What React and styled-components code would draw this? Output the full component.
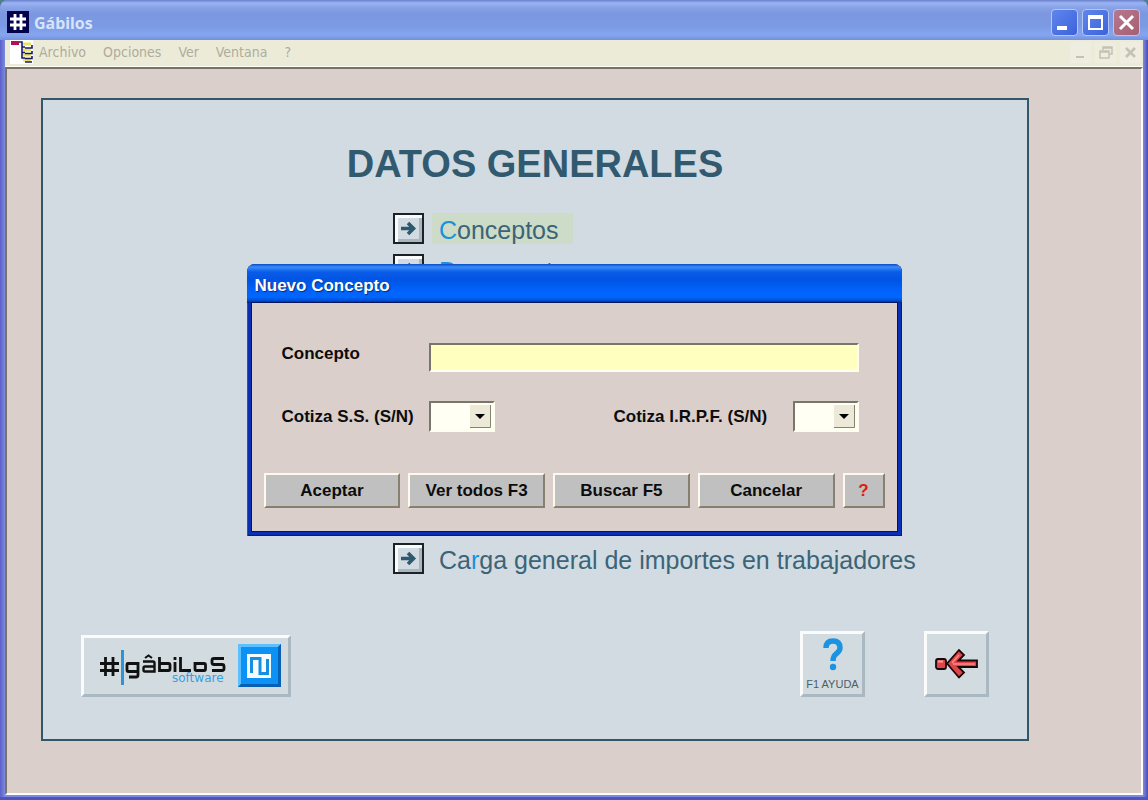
import React from "react";
import styled, { createGlobalStyle } from "styled-components";

const GlobalStyle = createGlobalStyle`
  * {
    box-sizing: border-box;
  }
  body {
    margin: 0;
    background: #4f7f8c;
    font-family: "Liberation Sans", Arial, sans-serif;
  }
`;

const Window = styled.div`
  min-height: 100vh;
  display: flex;
  flex-direction: column;
  padding: 0 5px 5px;
  border-radius: 8px 8px 0 0;
  background: linear-gradient(to right, #5a5fc8 0, #7c8ce0 5px, #7c8ce0 calc(100% - 5px), #4a4bb8 100%);
  box-shadow: inset 0 -3px 0 #5253bf;
`;

const TitleBar = styled.header`
  height: 40px;
  margin: 0 -5px;
  padding: 4px 8px 0 7px;
  display: flex;
  align-items: center;
  gap: 5px;
  border-radius: 8px 8px 0 0;
  background: linear-gradient(#6a80cc 0, #9ab4f2 3px, #8aa3e8 7px, #7b97e0 14px, #7c9ae4 26px, #84a6ef 35px, #7390dc 40px);
`;

const AppTitle = styled.h1`
  flex: 1;
  margin: 0;
  padding-top: 2px;
  font: bold 16px/22px "Noto Sans", sans-serif;
  color: #d5e4fb;
`;

const Controls = styled.div`
  display: flex;
  gap: 4px;
`;

const ControlButton = styled.button`
  width: 27px;
  height: 27px;
  padding: 0;
  display: flex;
  border: 1px solid #b4c6f6;
  border-radius: 4px;
  background: ${(props) => (props.$close ? "linear-gradient(135deg, #b5788f, #a85f70)" : "linear-gradient(135deg, #5f86ec, #3c62dc)")};

  svg {
    width: 25px;
    height: 25px;
  }
`;

const MenuBar = styled.nav`
  height: 27px;
  padding: 0 2px 2px 5px;
  display: flex;
  align-items: center;
  background: #ecebd8;
  border-bottom: 1px solid #fffef4;
`;

const MenuLink = styled.a`
  margin-right: 17px;
  font: 14px/20px "DejaVu Sans Condensed", "DejaVu Sans", sans-serif;
  color: #aeac9c;
  text-decoration: none;
`;

const MenuIcon = styled.svg`
  width: 23px;
  height: 24px;
  margin-right: 6px;
`;

const ChildControls = styled.div`
  margin-left: auto;
  display: flex;
  gap: 4px;
`;

const ChildButton = styled.button`
  width: 21px;
  height: 21px;
  padding: 0;
  border: none;
  background: #eeeddf;
`;

const Client = styled.main`
  flex: 1;
  display: flex;
  padding: 29px 112px 52px 34px;
  background: #dacfca;
  border: 2px solid #77736b;
  border-right-color: #fffdfa;
  border-bottom-color: #fffdfa;
`;

const Panel = styled.section`
  flex: 1;
  display: flex;
  flex-direction: column;
  padding: 40px 38px 42px;
  background: #d2dbe1;
  border: 2px solid #315768;
`;

const Heading = styled.h2`
  margin: 0;
  font-size: 38px;
  line-height: 48px;
  text-align: center;
  color: #315a70;
`;

const OptionList = styled.ul`
  height: 361px;
  margin: 25px 0 0 312px;
  padding: 0;
  display: flex;
  flex-direction: column;
  gap: 10px;
  list-style: none;
`;

const Option = styled.li`
  display: flex;
  align-items: center;
  gap: 8px;

  &:last-child {
    margin-top: auto;
  }
`;

const ArrowButton = styled.button`
  width: 31px;
  height: 31px;
  padding: 0;
  display: flex;
  align-items: center;
  justify-content: center;
  border: 2px solid #1b2226;
  background: #d2dbe1;
  box-shadow: inset 3px 3px 0 #f8fafb, inset -3px -3px 0 #aab6be;
`;

const OptionLink = styled.a`
  padding: 3px 14px 0 7px;
  font-size: 25px;
  line-height: 28px;
  color: #3b6478;
  text-decoration: none;
  white-space: nowrap;
  background: ${(props) => (props.$active ? "#cddcc8" : "transparent")};
`;

const HotKey = styled.span`
  color: #1b91dc;
`;

const Footer = styled.footer`
  margin-top: auto;
  display: flex;
  align-items: flex-end;
  gap: 59px;
`;

const RaisedButton = styled.button`
  width: ${(props) => props.$width}px;
  height: ${(props) => props.$height}px;
  padding: 0;
  display: flex;
  flex-direction: column;
  align-items: center;
  justify-content: center;
  background: #d2dbe0;
  border: 3px solid #fafcfc;
  border-right-color: #aab8c2;
  border-bottom-color: #aab8c2;
`;

const LogoButton = styled(RaisedButton)`
  margin-right: auto;
`;

const HelpText = styled.span`
  padding-top: 4px;
  font-size: 11px;
  line-height: 14px;
  color: #4c5f69;
  white-space: nowrap;
`;

const Overlay = styled.div`
  position: fixed;
  inset: 0;
  display: flex;
  align-items: center;
  justify-content: center;
`;

const Dialog = styled.form`
  width: 655px;
  padding: 0 5px 5px;
  border-radius: 8px 8px 0 0;
  background: #0b2fb4;
  box-shadow: inset 1px 0 0 #1a52d8, inset -1px -1px 0 #001c86;
`;

const DialogTitle = styled.h2`
  height: 39px;
  margin: 0 -5px;
  padding: 4px 8px 0;
  border-radius: 8px 8px 0 0;
  font: bold 17px/36px "Liberation Sans", sans-serif;
  color: #fff;
  text-shadow: 1px 1px 1px #0a2a80;
  background: linear-gradient(#0a4ac4 0, #3b8cf8 3px, #0a5ce8 8px, #0054e3 16px, #0062fb 26px, #0068ff 33px, #0048cc 37px, #001c6c 39px);
`;

const DialogBody = styled.div`
  padding: 40px 12px 23px;
  background: #dacfca;
  outline: 1px solid #04155c;
`;

const Fields = styled.div`
  display: flex;
  flex-direction: column;
  gap: 29px;
  padding: 0 26px 0 18px;
`;

const FieldRow = styled.div`
  display: flex;
  align-items: flex-start;
  justify-content: space-between;
`;

const Label = styled.label`
  min-width: ${(props) => props.$minWidth || 0}px;
  font-size: 17px;
  font-weight: bold;
  line-height: 22px;
  color: #0c0c0c;
  white-space: nowrap;
`;

const TextBox = styled.input`
  flex: 1;
  height: 29px;
  padding: 0 4px;
  font-size: 17px;
  background: #ffffc0;
  border: 2px solid #77766a;
  border-right-color: #fffff0;
  border-bottom-color: #fffff0;
`;

const SelectGroup = styled.div`
  display: flex;
  align-items: center;
`;

const SelectBox = styled.span`
  position: relative;
  display: block;
  width: 66px;
  height: 31px;

  svg {
    position: absolute;
    top: 4px;
    right: 4px;
    pointer-events: none;
  }
`;

const Select = styled.select`
  appearance: none;
  width: 100%;
  height: 100%;
  padding: 0 24px 0 4px;
  font-size: 16px;
  background: #fffff4;
  border: 2px solid #77766a;
  border-right-color: #fffff0;
  border-bottom-color: #fffff0;
  border-radius: 0;
`;

const Buttons = styled.div`
  display: flex;
  gap: 8px;
  margin-top: 41px;
`;

const PushButton = styled.button`
  flex: ${(props) => (props.$small ? "0 0 42px" : "1")};
  height: 35px;
  padding: 0;
  font: bold 17px/22px "Liberation Sans", sans-serif;
  color: ${(props) => (props.$small ? "#e01818" : "#0c0c0c")};
  background: #c0c0c0;
  border: 2px solid #fdf9ee;
  border-right-color: #85806f;
  border-bottom-color: #85806f;
`;

const HashIcon = () => (
  <svg width="22" height="22" viewBox="0 0 22 22">
    <path fill="#02024c" d="M0 0h22v22H0z" />
    <path d="M8 3v16M14 3v16M3 8h16M3 14h16" stroke="#fff" strokeWidth="2.800" />
  </svg>
);

const Arrow = () => (
  <svg width="17" height="17" viewBox="0 0 17 17">
    <path d="M1 8.500h12M8 3l5.500 5.500L8 14" fill="none" stroke="#2c5a70" strokeWidth="3.600" />
  </svg>
);

const GabilosLogo = () => (
  <svg width="204" height="56" viewBox="84 638 204 56">
    <g fill="none" stroke="#111" strokeWidth="2.800">
      <path d="M105.500 657v19M113 657v19M100 663.500h19M100 670.500h19" />
      <path d="M138 663.500H128q-1 0-1 1v6q0 1 1 1h10M138 662v13q0 2-2 2h-7" />
      <path d="M143 661.500h10q1.500 0 1.500 1.500v8.500H145q-1.500 0-1.500-1.500v-2q0-1.500 1.500-1.500h9" strokeWidth="2.400" />
      <path d="M145 658l3.500-2.500 3.500 2.500" strokeWidth="2" />
      <path d="M159.500 657v13.500h9q1.500 0 1.500-1.500v-4q0-1.500-1.500-1.500h-9" />
      <path d="M175 662v10M175 657v3M180.500 657v13.500H191M195 663.500h9q1.500 0 1.500 1.500v4q0 1.500-1.500 1.500h-7.500q-1.500 0-1.500-1.500z" />
      <path d="M224 658.500h-10q-2 0-2 2v2q0 2 2 2h8q2 0 2 2v2q0 2-2 2h-10" />
    </g>
    <path d="M121 650h3v35h-3z" fill="#2c94d8" />
    <text x="172" y="682" fill="#3aa0e0" fontSize="12" fontFamily="DejaVu Sans, sans-serif">software</text>
    <path d="M238 644h43v43h-43z" fill="#0c92f4" />
    <path d="M238 644h43l-3 3h-37v37l-3 3z" fill="#5cc0ff" />
    <path d="M281 644v43h-43l3-3h37v-37z" fill="#0760b4" />
    <path d="M247 654h24v24h-24z" fill="#f4fafd" />
    <path d="M251.500 673v-14.500h8.500v15h7.500V659" fill="none" stroke="#168fe0" strokeWidth="3" />
  </svg>
);

const BackArrow = () => (
  <svg width="46" height="34" viewBox="1 0 46 34">
    <path d="M14 16.500L26 3l5 5-5.500 5.500H44v6.500H25.500L31 25.500l-5 5z" fill="#e04448" stroke="#17090a" strokeWidth="1.800" />
    <path d="M19 16l7-8M20 17h22" stroke="#ff8c88" strokeWidth="1.500" />
    <rect x="3" y="12" width="10" height="10" rx="2" fill="#e04448" stroke="#17090a" strokeWidth="1.800" />
    <path d="M5 14.500h5" stroke="#ff9c98" strokeWidth="2" />
  </svg>
);

const DropArrow = () => (
  <svg width="21" height="23" viewBox="0 0 21 23">
    <path fill="#ece9d8" d="M0 0h21v23H0z" />
    <path d="M20.500 0v22.500H0" fill="none" stroke="#85826f" />
    <path d="M5 9h10l-5 5z" fill="#000" />
  </svg>
);

const YesNoField = ({ id, label, minWidth }) => (
  <SelectGroup>
    <Label htmlFor={id} $minWidth={minWidth}>{label}</Label>
    <SelectBox>
      <Select id={id} defaultValue="">
        <option value=""></option>
        <option value="S">S</option>
        <option value="N">N</option>
      </Select>
      <DropArrow />
    </SelectBox>
  </SelectGroup>
);

const menus = ["Archivo", "Opciones", "Ver", "Ventana", "?"];

const options = [
  { before: "", key: "C", after: "onceptos", active: true },
  { before: "", key: "D", after: "ocumentos" },
  { before: "Ca", key: "r", after: "ga general de importes en trabajadores" },
];

const App = () => {
  return (
    <>
      <GlobalStyle />
      <Window>
        <TitleBar>
          <HashIcon />
          <AppTitle>Gábilos</AppTitle>
          <Controls>
            <ControlButton aria-label="Minimizar">
              <svg viewBox="0 0 25 25"><path d="M5 16h10v4H5z" fill="#fff" /></svg>
            </ControlButton>
            <ControlButton aria-label="Maximizar">
              <svg viewBox="0 0 25 25"><path d="M6 7h13v12H6z" fill="none" stroke="#fff" strokeWidth="2" /><path d="M5 5h15v4H5z" fill="#fff" /></svg>
            </ControlButton>
            <ControlButton $close aria-label="Cerrar">
              <svg viewBox="0 0 25 25"><path d="M6 6l13 13M19 6L6 19" stroke="#fff" strokeWidth="3" /></svg>
            </ControlButton>
          </Controls>
        </TitleBar>
        <MenuBar>
          <MenuIcon viewBox="0 0 23 24">
            <path fill="#fff" d="M0 0h23v24H0z" />
            <path d="M1 1h8v4H1z" fill="#b3124e" />
            <path d="M13 4h8M13 10h8M13 15h8M13 20h8" stroke="#e6e45c" strokeWidth="3" />
            <path d="M9 2h3v16h3M12 7h3M12 12.500h3M15 8h7V5M15 13.500h7V11M15 18.500h7V16M15 22h7" fill="none" stroke="#18186c" strokeWidth="1.600" />
          </MenuIcon>
          {menus.map((menu) => (
            <MenuLink href="#" key={menu}>{menu}</MenuLink>
          ))}
          <ChildControls>
            <ChildButton aria-label="Minimizar ventana">
              <svg width="21" height="21"><path d="M6 15h8" stroke="#c4c2b2" strokeWidth="2" /></svg>
            </ChildButton>
            <ChildButton aria-label="Restaurar ventana">
              <svg width="21" height="21"><path d="M8 8V5h9v7h-3M5 9h9v7H5zM5 10h9M8 6h9" fill="none" stroke="#c4c2b2" strokeWidth="1.500" /></svg>
            </ChildButton>
            <ChildButton aria-label="Cerrar ventana">
              <svg width="21" height="21"><path d="M6 6l9 9M15 6l-9 9" stroke="#c4c2b2" strokeWidth="2.500" /></svg>
            </ChildButton>
          </ChildControls>
        </MenuBar>
        <Client>
          <Panel>
            <Heading>DATOS GENERALES</Heading>
            <OptionList>
              {options.map(({ before, key, after, active }) => (
                <Option key={after}>
                  <ArrowButton aria-label={before + key + after}><Arrow /></ArrowButton>
                  <OptionLink href="#" $active={active}>
                    {before}<HotKey>{key}</HotKey>{after}
                  </OptionLink>
                </Option>
              ))}
            </OptionList>
            <Footer>
              <LogoButton $width={210} $height={62} aria-label="Gábilos software"><GabilosLogo /></LogoButton>
              <RaisedButton $width={65} $height={66}>
                <svg width="22" height="36" viewBox="0 0 22 36">
                  <path d="M4 11q0-7 7-7t7 7q0 3-4 6-3 2-3 7" fill="none" stroke="#1b93e2" strokeWidth="5.400" />
                  <circle cx="11" cy="30" r="3.200" fill="#1b93e2" />
                </svg>
                <HelpText>F1 AYUDA</HelpText>
              </RaisedButton>
              <RaisedButton $width={65} $height={66} aria-label="Volver"><BackArrow /></RaisedButton>
            </Footer>
          </Panel>
        </Client>
      </Window>
      <Overlay>
        <Dialog role="dialog" aria-labelledby="dialog-title" onSubmit={(e) => e.preventDefault()}>
          <DialogTitle id="dialog-title">Nuevo Concepto</DialogTitle>
          <DialogBody>
            <Fields>
              <FieldRow>
                <Label htmlFor="concepto" $minWidth={147}>Concepto</Label>
                <TextBox id="concepto" type="text" />
              </FieldRow>
              <FieldRow>
                <YesNoField id="cotiza-ss" label="Cotiza S.S. (S/N)" minWidth={147} />
                <YesNoField id="cotiza-irpf" label="Cotiza I.R.P.F. (S/N)" minWidth={179} />
              </FieldRow>
            </Fields>
            <Buttons>
              <PushButton>Aceptar</PushButton>
              <PushButton type="button">Ver todos F3</PushButton>
              <PushButton type="button">Buscar F5</PushButton>
              <PushButton type="button">Cancelar</PushButton>
              <PushButton type="button" $small>?</PushButton>
            </Buttons>
          </DialogBody>
        </Dialog>
      </Overlay>
    </>
  );
};

export default App;
